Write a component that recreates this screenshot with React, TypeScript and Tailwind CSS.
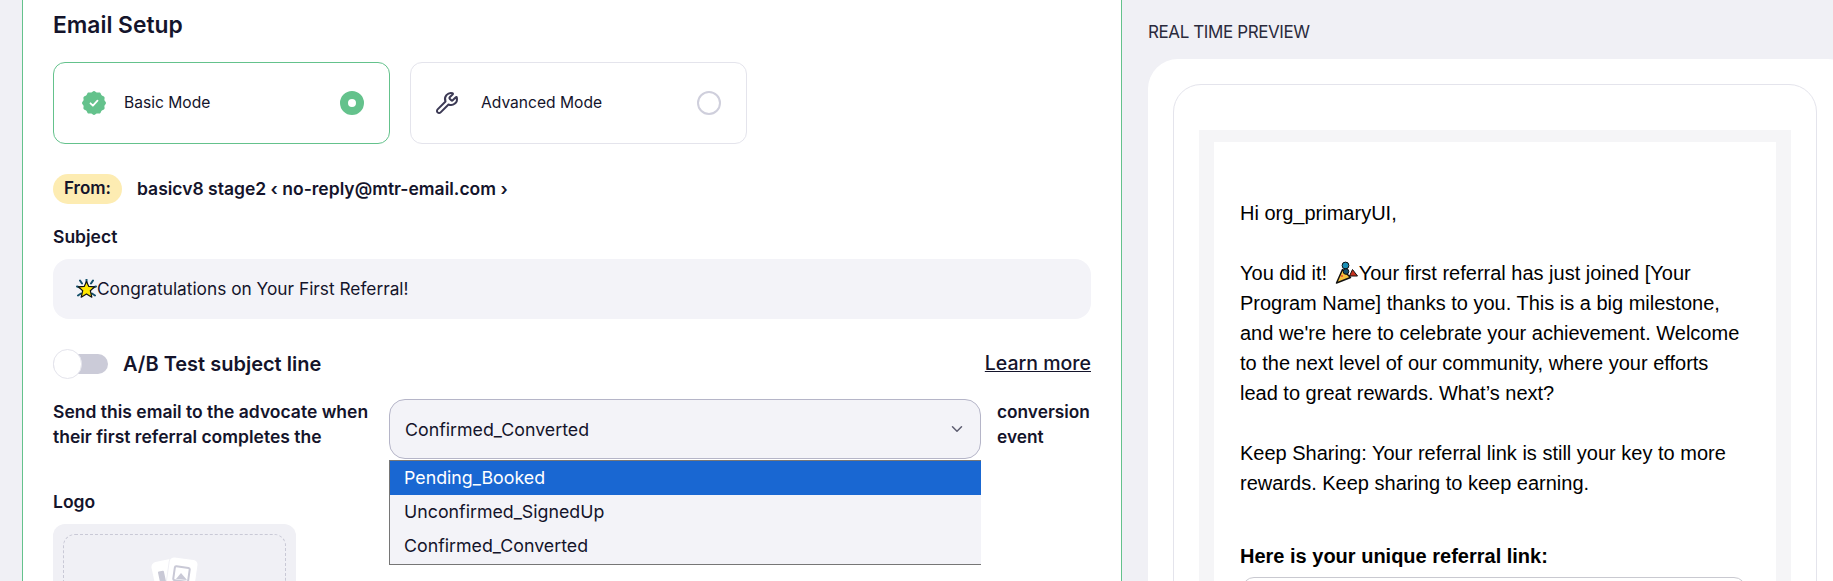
import React from "react";
import { ChevronDown, Wrench } from "lucide-react";

const scallop = (() => {
  const pts: string[] = [];
  for (let i = 0; i < 96; i++) {
    const a = (i / 96) * Math.PI * 2;
    const r = 11.4 + 0.6 * Math.cos(12 * a);
    pts.push(`${(12 + r * Math.cos(a)).toFixed(2)},${(12 + r * Math.sin(a)).toFixed(2)}`);
  }
  return pts.join(" ");
})();

const BadgeIcon = () => (
  <svg width="24" height="24" viewBox="0 0 24 24" className="shrink-0">
    <polygon points={scallop} fill="#64c28c" />
    <path d="M8.500 12.300l2.400 2.400 4.600-5" fill="none" stroke="#fff" strokeWidth="1.800" strokeLinecap="round" strokeLinejoin="round" />
  </svg>
);

const StarEmoji = () => (
  <svg width="21" height="21" viewBox="0 0 21 21" className="shrink-0">
    <path d="M4 1.500l2 3M10.500 .5v3M17 1.500l-2 3M1 7.500l3 1M20 7.500l-3 1M2 16.500l3-2M19 16.500l-3-2" stroke="#14506b" strokeWidth="2" strokeLinecap="round" />
    <path d="M10.500 2.500l2.300 4.900 5.700.500-4.200 3.800 1.500 6.500-5.300-3.300-5.300 3.300 1.500-6.500-4.200-3.800 5.700-.500z" fill="#ffe600" stroke="#111" strokeWidth="1.200" strokeLinejoin="round" />
  </svg>
);

const PartyEmoji = () => (
  <svg width="24" height="24" viewBox="0 0 23 24" className="ml-[2px] inline-block align-[-5px]">
    <path d="M7 8.500L1 22l14-5.500z" fill="#f7c23c" stroke="#111" strokeWidth="1.500" strokeLinejoin="round" />
    <circle cx="10" cy="4.500" r="3.400" fill="#1b8fb5" stroke="#111" strokeWidth="1" />
    <circle cx="10.500" cy="10.500" r="2.800" fill="#14506b" stroke="#111" strokeWidth="1" />
    <path d="M14 15l3-6.500 5 6.500z" fill="#c8321f" stroke="#111" strokeWidth="1" strokeLinejoin="round" />
    <circle cx="6.500" cy="15" r="1" fill="#e2483a" />
  </svg>
);

const LogoIcon = () => (
  <svg width="50" height="40" viewBox="0 0 50 40" className="shrink-0">
    <rect x="4" y="4" width="26" height="36" rx="5" fill="#fff" transform="rotate(-12 17 22)" />
    <rect x="17" y="2" width="29" height="40" rx="5" fill="#fff" stroke="#f0f0f5" strokeWidth="1" transform="rotate(8 31 22)" />
    <rect x="9" y="15" width="6" height="13" rx="1" fill="#c9c9d6" transform="rotate(-12 12 21)" />
    <rect x="24" y="11" width="15" height="14" rx="1.500" fill="none" stroke="#c9c9d6" strokeWidth="2" transform="rotate(8 31 18)" />
    <path d="M26 23l5-6 6 7z" fill="#c9c9d6" />
  </svg>
);

const ModeCard = ({ active, icon, label }: { active?: boolean; icon: React.ReactNode; label: string }) => (
  <div
    className={`flex h-[82px] w-[337px] items-center rounded-[12px] border bg-white pl-[28px] pr-[25px] ${
      active ? "border-[#64c28c]" : "border-[#e4e4ec]"
    }`}
  >
    {icon}
    <span className="ml-[18px] text-[15.6px] font-normal text-[#14142b]">{label}</span>
    {active ? (
      <span className="ml-auto h-6 w-6 rounded-full border-[8px] border-[#64c28c] bg-white" />
    ) : (
      <span className="ml-auto h-6 w-6 rounded-full border-2 border-[#cfcfdc] bg-white" />
    )}
  </div>
);

export default function App() {
  return (
    <div className="flex h-[581px] w-[1833px] overflow-hidden bg-[#f0f0f5] font-['Inter',sans-serif] text-[#14142b]">
      <div className="w-[22px] shrink-0" />
      <main className="w-[1100px] shrink-0 border-x border-[#64c28c] bg-white pl-[30px] pr-[30px]">
        <h1 className="mt-[11px] text-[22.8px] font-semibold leading-[28px]">Email Setup</h1>
        <div className="mt-[23px] flex gap-[20px]">
          <ModeCard active icon={<BadgeIcon />} label="Basic Mode" />
          <ModeCard icon={<Wrench size={24} strokeWidth={2} className="-ml-1 mr-1 shrink-0 text-[#3c3a55]" />} label="Advanced Mode" />
        </div>
        <div className="mt-[30px] flex items-center">
          <span className="flex h-[30px] w-[69px] items-center justify-center rounded-full bg-[#fdecb2] text-[17px] font-semibold">From:</span>
          <span className="ml-[15px] text-[17.500px] font-semibold">basicv8 stage2 ‹ no-reply@mtr-email.com ›</span>
        </div>
        <div className="mt-[22px] text-[17.500px] font-semibold leading-[22px]">Subject</div>
        <div className="mt-[11px] flex h-[60px] w-[1038px] items-center rounded-[16px] bg-[#f3f3f8] pl-[23px] text-[17.300px]">
          <StarEmoji />
          <span>Congratulations on Your First Referral!</span>
        </div>
        <div className="mt-[30px] flex h-[30px] w-[1038px] items-center">
          <span className="relative h-5 w-[55px] rounded-full bg-[#cbcbd8]">
            <span className="absolute left-0 top-[-5px] h-[30px] w-[29px] rounded-full border border-[#e4e4ec] bg-white" />
          </span>
          <span className="ml-[15px] text-[20px] font-semibold">A/B Test subject line</span>
          <a className="ml-auto text-[19.500px] font-medium underline">Learn more</a>
        </div>
        <div className="mt-[20px] flex w-[1038px]">
          <p className="w-[336px] shrink-0 text-[17.500px] font-semibold leading-[25px]">
            Send this email to the advocate when their first referral completes the
          </p>
          <div className="relative h-[60px] w-[592px] shrink-0">
            <div className="flex h-full items-center justify-between rounded-[16px] border border-[#b5b5c8] bg-[#f3f3f8] pl-[15px] pr-[14px] pt-[2px] text-[17.800px]">
              <span>Confirmed_Converted</span>
              <ChevronDown size={18} className="-mt-[2px] text-[#5d5d70]" />
            </div>
            <ul className="absolute left-0 right-0 top-[61px] border-y border-l border-[#767676] bg-[#f3f3f8] pb-[1px] text-[17.800px]">
              <li className="flex h-[34px] items-center bg-[#1967d2] pl-[14px] pt-[1px] text-white">Pending_Booked</li>
              <li className="flex h-[34px] items-center pl-[14px] pt-[1px]">Unconfirmed_SignedUp</li>
              <li className="flex h-[34px] items-center pl-[14px] pt-[1px]">Confirmed_Converted</li>
            </ul>
          </div>
          <p className="ml-[16px] w-[94px] shrink-0 text-[17.300px] font-semibold leading-[25px]">conversion event</p>
        </div>
        <div className="mt-[32px] text-[17.500px] font-semibold leading-[22px]">Logo</div>
        <div className="mt-[11px] h-[120px] w-[243px] rounded-[12px] bg-[#f0f0f5] p-[10px]">
          <div className="flex h-full flex-col items-center rounded-[12px] border border-dashed border-[#c9c9d6] pt-[21px]">
            <LogoIcon />
          </div>
        </div>
      </main>
      <aside className="min-w-0 flex-1 pl-[26px]">
        <h2 className="mt-[21px] text-[17px] font-normal uppercase leading-[22px] tracking-[-0.4px] text-[#2a2a3c]">Real time preview</h2>
        <div className="mt-[16px] h-[600px] w-[710px] rounded-[30px] bg-white pl-[25px] pt-[25px]">
          <div className="h-[600px] w-[644px] rounded-[28px] border border-[#e4e4ec] px-[25px] pt-[45px]">
            <div className="bg-[#f5f5f7] px-[15px] pt-[12px]">
              <div className="h-[600px] bg-white px-[26px] pt-[56px] font-['Liberation_Sans',Arial,sans-serif] text-[20px] leading-[30px] text-black">
                <p>Hi org_primaryUI,</p>
                <p className="mt-[30px]">
                  You did it! <PartyEmoji />Your first referral has just joined [Your Program Name] thanks to you. This is a big milestone, and we're here to celebrate your achievement. Welcome to the next level of our community, where your efforts lead to great rewards. What’s next?
                </p>
                <p className="mt-[30px]">Keep Sharing: Your referral link is still your key to more rewards. Keep sharing to keep earning.</p>
                <p className="mt-[43px] font-bold">Here is your unique referral link:</p>
                <div className="ml-[2px] mt-[6px] h-[50px] w-[504px] rounded-[12px] border border-[#c9c9d0]" />
              </div>
            </div>
          </div>
        </div>
      </aside>
    </div>
  );
}
